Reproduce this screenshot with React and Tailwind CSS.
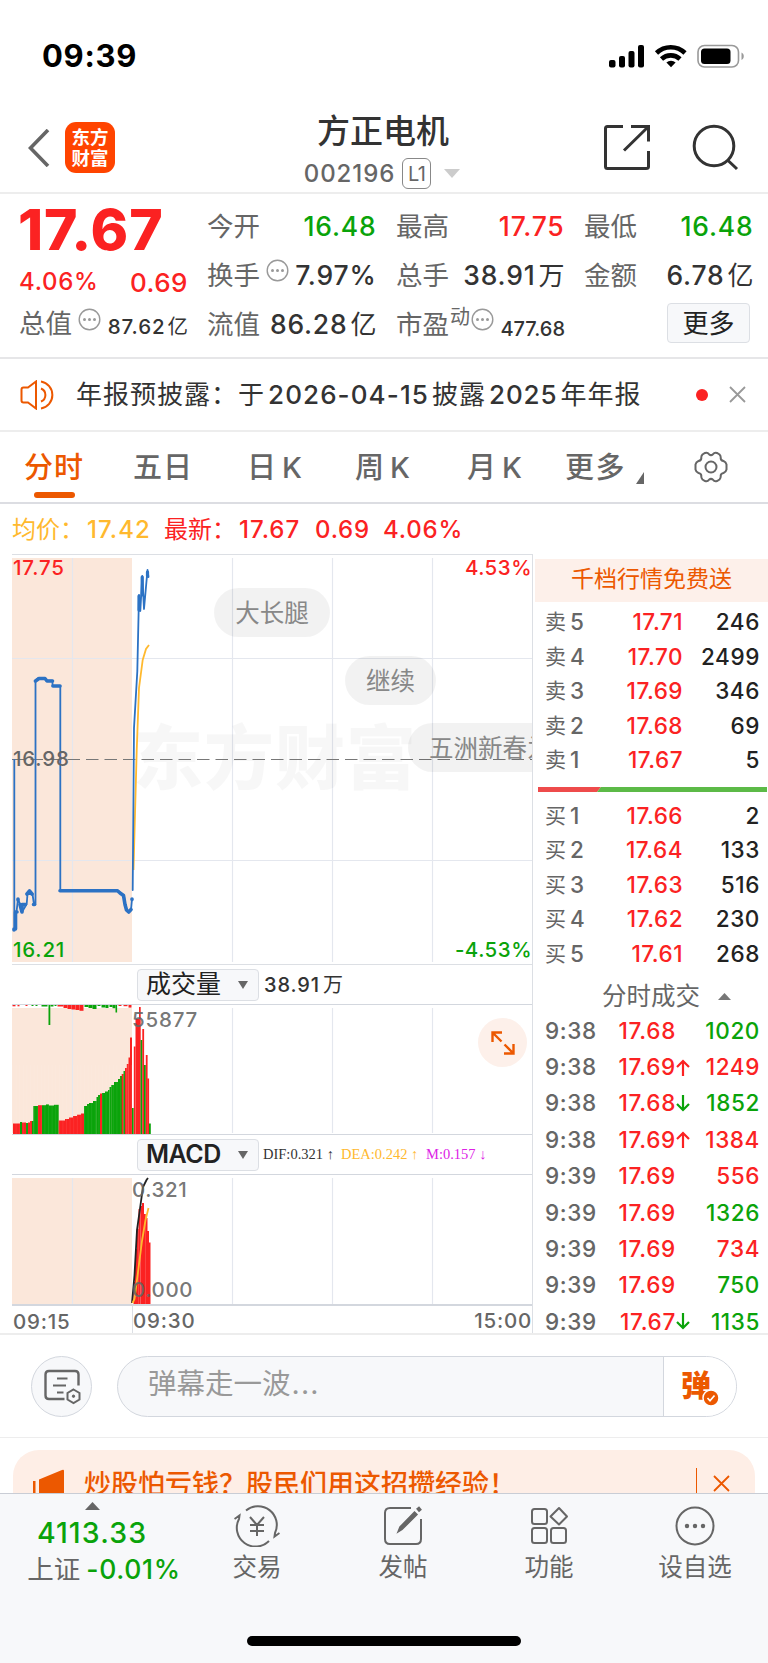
/* eslint-disable react/prop-types */

const RED = "#fb2222";
const GREEN = "#0aa30a";

const asks = [
  ["卖", "5", "17.71", "246"],
  ["卖", "4", "17.70", "2499"],
  ["卖", "3", "17.69", "346"],
  ["卖", "2", "17.68", "69"],
  ["卖", "1", "17.67", "5"],
];

const bids = [
  ["买", "1", "17.66", "2"],
  ["买", "2", "17.64", "133"],
  ["买", "3", "17.63", "516"],
  ["买", "4", "17.62", "230"],
  ["买", "5", "17.61", "268"],
];

const trades = [
  { time: "9:38", price: "17.68", qty: "1020", side: "sell" },
  { time: "9:38", price: "17.69", dir: "up", qty: "1249", side: "buy" },
  { time: "9:38", price: "17.68", dir: "down", qty: "1852", side: "sell" },
  { time: "9:38", price: "17.69", dir: "up", qty: "1384", side: "buy" },
  { time: "9:39", price: "17.69", qty: "556", side: "buy" },
  { time: "9:39", price: "17.69", qty: "1326", side: "sell" },
  { time: "9:39", price: "17.69", qty: "734", side: "buy" },
  { time: "9:39", price: "17.69", qty: "750", side: "sell" },
  { time: "9:39", price: "17.67", dir: "down", qty: "1135", side: "sell" },
];

// [x, width, bar height, colour]
const volume = [
  [1, 7, 10.5, RED], [8, 2, 12, GREEN], [10, 4, 11.5, RED], [14, 2, 11, GREEN], [16, 2, 11.5, RED],
  [18, 2, 13, RED], [20, 1.6, 13, GREEN], [21.3, 5, 28, GREEN], [26, 4, 28.8, RED], [30, 4, 28.8, GREEN],
  [34, 3, 29.6, GREEN], [37, 5, 28.5, GREEN], [42, 4.7, 29.2, GREEN], [46.7, 7, 13.5, RED], [53, 4, 15, RED],
  [57, 4, 16.5, RED], [61, 4, 18, RED], [65, 4, 19.3, RED], [69, 3.2, 20.5, RED], [72, 3, 28, GREEN],
  [75, 2, 30, GREEN], [77, 4, 31, GREEN], [81, 3.7, 33, GREEN], [84.5, 1.6, 37, GREEN], [86, 2, 39, GREEN],
  [88, 2, 40.5, RED], [90, 3, 41, GREEN], [93, 3, 42.5, GREEN], [96, 1.6, 44, GREEN], [97.5, 2, 47, GREEN],
  [99.3, 3, 49, GREEN], [102, 4, 52, GREEN], [106, 2, 55, GREEN], [108, 2, 58, GREEN], [109.7, 2, 60, RED],
  [111.5, 1.8, 63, GREEN], [113, 1.8, 66, RED], [114.8, 1.8, 70, RED], [116.5, 1.8, 76.5, RED], [118, 2, 96.5, RED],
  [120, 1.7, 26, GREEN], [121.8, 1.7, 87.5, RED], [123.5, 3.5, 115, RED], [127, 1.7, 127, RED],
  [128.6, 1.8, 94, GREEN], [130.3, 1.8, 105, RED], [132, 1.8, 69, GREEN], [133.8, 1.8, 79, RED],
  [135.3, 1.8, 55.5, RED], [137, 1.8, 10.5, GREEN],
];

// unmatched orders hanging from the top edge during the call auction
const auction = [
  [1, 3, 1.3, RED], [6, 2, 1.3, RED], [14, 2, 1, RED], [20, 2, 1, GREEN], [24, 2, 1, GREEN], [30, 6, 1.5, GREEN],
  [37, 1.8, 20, GREEN], [39, 3, 1.5, GREEN], [43, 2, 1, GREEN], [46, 6, 1.5, RED], [52, 4, 3, RED], [56, 4, 4, RED],
  [60, 4, 4.5, RED], [64, 4, 5, RED], [68, 4, 5.8, RED], [73, 4, 2, GREEN], [77, 4, 3, GREEN], [81, 4, 4, GREEN],
  [86, 3, 1, GREEN], [90, 4, 2.5, GREEN], [94, 3, 3, GREEN], [98, 3, 2, GREEN], [101, 3, 3.2, GREEN],
  [104, 1.6, 7.5, GREEN], [107, 3, 1, RED], [112, 4, 1.2, RED], [117, 3, 2.6, RED],
];

const macdBars = [
  [122, 22], [123.5, 55], [125.2, 75], [127, 95], [129, 98], [130.5, 101],
  [132.2, 90], [134, 86], [135.5, 73], [137, 61.5],
];

const StatusBar = () => (
  <div className="h-[106px] shrink-0 flex items-start justify-between pl-[42px] pr-6 pt-[38px] text-black">
    <span className="text-[31px] leading-[35px] font-bold tracking-[0.7px]">09:39</span>
    <svg className="mt-1 -mr-px" width="137" height="28" viewBox="608 42 137 28">
      <rect x="609" y="60" width="6.500" height="7.5" rx="2" />
      <rect x="619" y="56" width="6" height="11.5" rx="2" />
      <rect x="628.5" y="51" width="6" height="16.5" rx="2" />
      <rect x="638" y="45" width="6" height="22.5" rx="2" />
      <g fill="none" stroke="#000" strokeWidth="4.6">
        <path d="M656.500 53a20.5 20.5 0 0 1 28.500 0" />
        <path d="M661.500 59a13.5 13.5 0 0 1 18.500 0" />
      </g>
      <path d="M671 67.3l-4.6-4.8a6.6 6.6 0 0 1 9.2 0z" />
      <rect x="698" y="45.5" width="40.5" height="21.5" rx="6.5" fill="none" stroke="#999" strokeWidth="1.6" />
      <rect x="701" y="48.5" width="29.500" height="15.5" rx="3.5" />
      <path d="M741.500 52.5c3 1.3 3 6.200 0 7.500z" fill="#999" />
    </svg>
  </div>
);

const Header = () => (
  <div className="h-[88px] shrink-0 border-b-2 border-[#ededed] flex items-start">
    <div className="flex items-center pl-7 pt-4 w-[204px]">
      <svg width="22" height="38" viewBox="0 0 22 38" fill="none" stroke="#666" strokeWidth="3.6">
        <path d="M20 1L2.500 19 20 37" />
      </svg>
      <div className="ml-[15px] w-[50px] h-[51px] rounded-[11px] bg-[#ff4400] text-white font-bold text-[18.500px] leading-[21px] flex flex-col items-center justify-center">
        <span>东方</span>
        <span>财富</span>
      </div>
    </div>
    <div className="flex flex-col items-center flex-1 pt-[6px] pr-[19px]">
      <div className="text-[33px] leading-[38px] font-medium text-[#333]">方正电机</div>
      <div className="flex items-center mt-[8px] mr-[2px]">
        <span className="text-[24px] leading-7 font-medium text-[#666] tracking-[0.9px]">002196</span>
        <span className="ml-[7px] w-[29px] h-[31px] border-[1.500px] border-[#888] rounded-[6px] text-[20px] text-[#666] flex items-center justify-center tracking-[-0.5px]">L1</span>
        <svg className="ml-[13px]" width="16" height="9" viewBox="0 0 16 9" fill="#ccc">
          <path d="M0 0h16L8 9z" />
        </svg>
      </div>
    </div>
    <svg className="ml-[22px] mr-[29px] mt-[17px]" width="136" height="50" viewBox="603 123 136 50" fill="none" stroke="#333" strokeWidth="3">
      <path d="M623 126.500H607.500Q605.500 126.500 605.500 128.500V166.500Q605.500 168.500 607.500 168.500H646Q648.500 168.500 648.500 166.500V151" />
      <path d="M631 126.500H648.500V141.500M648.500 126.500L624 150.500" />
      <circle cx="714" cy="146" r="19.800" />
      <path d="M727.500 160L737 169" />
    </svg>
  </div>
);

const Dots = ({ className }) => (
  <svg className={className} width="23" height="23" viewBox="0 0 23 23">
    <circle cx="11.5" cy="11.5" r="10.300" fill="none" stroke="#999" strokeWidth="1.400" />
    <circle cx="6.500" cy="11.5" r="1.500" fill="#999" />
    <circle cx="11.500" cy="11.5" r="1.500" fill="#999" />
    <circle cx="16.500" cy="11.5" r="1.500" fill="#999" />
  </svg>
);

const Stat = ({ label, value, unit, color = "text-[#333]", icon }) => (
  <div className="h-[49px] flex items-center justify-between">
    <span className="flex items-center text-[26.500px] text-[#666] -ml-px">
      {label}
      {icon && <Dots className="ml-[6px] -mt-2.5" />}
    </span>
    <span className={`text-[26.500px] font-medium tracking-[0.8px] -mr-[1.500px] flex items-center ${color}`}>
      {value}
      {unit && <span className="ml-[3px] text-[26px] tracking-normal font-normal">{unit}</span>}
    </span>
  </div>
);

const Quote = () => (
  <div className="h-[165px] shrink-0 border-b-2 border-[#e6e6e8] pt-[8px] pl-5 flex text-[#333]">
    <div className="w-[167px] mr-[21px]">
      <div className="text-[57px] leading-[56px] font-extrabold text-[#fb2222] tracking-[0.9px] -ml-[2px]">17.67</div>
      <div className="flex justify-between h-[50px] items-center text-[#fb2222] -mt-px -ml-px -mr-px">
        <span className="text-[24px] font-medium tracking-[0.7px]">4.06%</span>
        <span className="text-[26px] font-medium tracking-[0.5px]">0.69</span>
      </div>
      <div className="flex items-center h-[44px] -mt-[5px] -ml-px -mr-px">
        <span className="text-[26.500px] text-[#666]">总值</span>
        <Dots className="ml-[6px] -mt-2.5" />
        <span className="ml-auto mt-[6px] text-[20.500px] font-medium tracking-[0.9px] whitespace-nowrap">
          87.62<span className="ml-[2px] font-normal tracking-normal">亿</span>
        </span>
      </div>
    </div>
    <div className="w-[167px] mr-[22px]">
      <Stat label="今开" value="16.48" color="text-[#0aa30a]" />
      <Stat label="换手" value="7.97%" icon />
      <Stat label="流值" value="86.28" unit="亿" />
    </div>
    <div className="w-[166px] mr-[22px]">
      <Stat label="最高" value="17.75" color="text-[#fb2222]" />
      <Stat label="总手" value="38.91" unit="万" />
      <div className="h-[49px] flex items-center -ml-px -mr-[2px] whitespace-nowrap">
        <span className="text-[26.500px] text-[#666]">市盈</span>
        <span className="text-[20px] text-[#666] -mt-4 ml-px">动</span>
        <Dots className="ml-px -mt-2.5" />
        <span className="ml-auto mt-[9px] text-[20px] font-medium">477.68</span>
      </div>
    </div>
    <div className="w-[167px]">
      <Stat label="最低" value="16.48" color="text-[#0aa30a]" />
      <Stat label="金额" value="6.78" unit="亿" />
      <div className="flex justify-end pr-0.5 pt-[3px]">
        <div className="w-[83px] h-10 rounded-[4px] border border-[#dcdfe4] bg-[#f7f8fa] text-[26px] text-[#222] flex items-center justify-center">
          更多
        </div>
      </div>
    </div>
  </div>
);

const Notice = () => (
  <div className="h-[73px] shrink-0 border-b-2 border-[#ededed] flex items-center pl-5 pr-[22px]">
    <svg width="36" height="30" viewBox="0 0 36 30" fill="none" stroke="#ec5800" strokeWidth="2">
      <path d="M16 1.500V28.500L8 22.500H3.500Q1.500 22.500 1.500 20.500V9.500Q1.500 7.500 3.500 7.500H8z" />
      <path d="M21 8.500a7 7 0 0 1 0 13M21 1.500a13.700 13.700 0 0 1 0 27" />
    </svg>
    <div className="ml-5 text-[26px] text-[#333] tracking-[1px] whitespace-nowrap font-medium">
      <span className="font-normal">年报预披露：于</span>
      <span className="mx-[3px] tracking-[1.100px]">2026-04-15</span>
      <span className="font-normal">披露</span>
      <span className="mx-[3px] tracking-[0.9px]">2025</span>
      <span className="font-normal">年年报</span>
    </div>
    <div className="ml-auto w-3 h-3 rounded-full bg-[#fb2222]" />
    <svg className="ml-[21px]" width="17" height="17" viewBox="0 0 17 17" stroke="#999" strokeWidth="1.800">
      <path d="M1 1l15 15M16 1L1 16" />
    </svg>
  </div>
);

const Tabs = () => (
  <div className="h-[72px] shrink-0 border-b-2 border-[#dcdde2] flex text-[29px] leading-[71px] text-[#666] font-medium whitespace-nowrap">
    <div className="relative ml-[24px] w-[109px] text-[#ec5800] tracking-[1px]">
      分时
      <span className="absolute left-[10px] bottom-[4px] w-[41px] h-[6px] rounded-full bg-[#ec5800]" />
    </div>
    <div className="w-[114px] tracking-[1px]">五日</div>
    <div className="w-[108px]">日<span className="ml-1.5">K</span></div>
    <div className="w-[112px]">周<span className="ml-1.5">K</span></div>
    <div className="w-[98px]">月<span className="ml-1.5">K</span></div>
    <div className="flex tracking-[1.500px]">
      更多
      <svg className="mt-[40px] ml-[10px]" width="8" height="12" viewBox="0 0 8 12" fill="#666">
        <path d="M8 0v12H0z" />
      </svg>
    </div>
    <svg className="ml-[50px] mt-[19px]" width="34" height="32" viewBox="0 0 34 32" fill="none" stroke="#666" strokeWidth="2">
      <path d="M11 2Q13.500 1 15 3.200Q17 5 19 3.200Q20.500 1 23 2L25.500 3.500Q27 5 26.700 7.500Q27 9.500 29.500 10Q32 11 32.500 13.500V18.500Q32 21 29.500 22Q27 22.500 26.700 24.500Q27 27 25.500 28.500L23 30Q20.500 31 19 28.800Q17 27 15 28.800Q13.500 31 11 30L8.500 28.500Q7 27 7.300 24.500Q7 22.500 4.500 22Q2 21 1.500 18.500V13.500Q2 11 4.500 10Q7 9.500 7.300 7.500Q7 5 8.500 3.500z" />
      <circle cx="17" cy="16" r="5.500" />
    </svg>
  </div>
);

const Summary = () => (
  <div className="h-[50px] shrink-0 flex items-center pl-[12px] text-[24px] font-medium text-[#fb2222] whitespace-nowrap pt-0.5">
    <span className="text-[#ffb92e] w-[152px]">
      <span className="font-normal">均价：</span>
      <span className="tracking-[1.100px] ml-[3px]">17.42</span>
    </span>
    <span className="w-[75px] font-normal">最新：</span>
    <span className="w-[76px] tracking-[1px]">17.67</span>
    <span className="w-[68px] tracking-[0.8px]">0.69</span>
    <span className="tracking-[0.8px]">4.06%</span>
  </div>
);

const Grid = ({ height, split }) => (
  <g>
    <rect x="0" y="3" width="120" height={height - 5} fill="#fbe7da" />
    <g stroke="#e4e7ee" strokeWidth="1.200">
      {[60, 220, 320, 420].map((x) => (
        <path key={x} d={`M${x + 0.5} 3V${height - 2}`} />
      ))}
      {split && <path d="M0 103.500H520M0 305.500H520" />}
    </g>
  </g>
);

const Pill = ({ className, children }) => (
  <div className={`absolute h-[49px] rounded-full bg-black/5 text-[24.500px] text-[#888] flex items-center justify-center pt-px whitespace-nowrap ${className}`}>
    {children}
  </div>
);

const PriceChart = () => (
  <div className="relative h-[411px] shrink-0 border-y border-[#dcdfe4] overflow-hidden">
    <svg className="block" width="520" height="409" viewBox="0 0 520 409">
      <Grid height={409} split />
      <text x="121" y="229" fontSize="70" fontWeight="900" fill="#000" fillOpacity="0.03" letterSpacing="1" fontFamily="Noto Sans CJK SC">
        东方财富
      </text>
      <path d="M0 204.500H520" stroke="#777" strokeWidth="1.200" strokeDasharray="12.500 6" />
      <path d="M121.500 315L124.700 196L127 133L130.700 105L134 94L137 90" fill="none" stroke="#ffb92e" strokeWidth="1.800" />
      <g fill="none" stroke="#2c72c4" strokeLinejoin="round" strokeLinecap="round">
        <path strokeWidth="1.800" d="M2.300 205V375M4.500 357L6 344L8 349L10 357L14.700 349L15.500 339L20.500 339L22 349.500H23.500V125.700L26.500 123H33L34.500 125.700H40.500V131H48.300V335.700H106L112 340.500L113 349.500L115 355L116.700 357L119 355L120 344" />
        <path strokeWidth="1.800" d="M120.700 335L122 173L125.300 116.500L127 40L128.300 56L130.300 21L132 54L135.500 15L136.500 22" />
        <path strokeWidth="3.600" d="M2 375V374M3.500 374V357H5M6 344V345M8 349.500L10 357V349.500H13.500M15 339L17.500 336L20 339M21.500 349.500H22.500M23.500 126L27 123.500H33L35 126H40.500M41 131H48M48 335.700H105.500L108 338L111.500 340.500L113 349.500L114.500 355L116.700 357L119 354.500M120 344V344.500" />
        <path strokeWidth="3.200" d="M127 41V55M130.200 22V40M135.500 17V21" />
      </g>
    </svg>
    <div className="absolute inset-0 text-[20.500px] leading-6 font-medium tracking-[0.8px]">
      <span className="absolute left-[1px] top-[1px] text-[#fb2222]">17.75</span>
      <span className="absolute left-[1px] top-[192px] text-[#666]">16.98</span>
      <span className="absolute left-[1px] bottom-[2px] text-[#0aa30a]">16.21</span>
      <span className="absolute right-0 top-[1px] text-[#fb2222] tracking-[0.5px]">4.53%</span>
      <span className="absolute right-0 bottom-[2px] text-[#0aa30a] tracking-[0.5px]">-4.53%</span>
    </div>
    <Pill className="left-[202px] top-[33px] w-[116px]">大长腿</Pill>
    <Pill className="left-[333px] top-[101px] w-[91px]">继续</Pill>
    <Pill className="left-[396px] top-[168px] w-[190px] pl-[21px] !justify-start">五洲新春为</Pill>
  </div>
);

const IndicatorButton = ({ children }) => (
  <div className="ml-[125px] w-[122px] h-[32px] rounded-[4px] border border-[#dcdfe4] bg-[#f7f8fa] flex items-center justify-between pl-[8px] pr-[10px] text-[25px] text-[#222]">
    {children}
    <svg width="10" height="8" viewBox="0 0 10 8" fill="#666">
      <path d="M0 0h10L5 8z" />
    </svg>
  </div>
);

const VolumeChart = () => (
  <>
    <div className="h-[39px] shrink-0 flex items-center pt-px">
      <IndicatorButton>成交量</IndicatorButton>
      <span className="ml-[5px] text-[20px] font-medium text-[#333] tracking-[0.9px]">
        38.91<span className="ml-[3px] font-normal">万</span>
      </span>
    </div>
    <div className="relative h-[131px] shrink-0 border-y border-[#d3d7de]">
      <svg className="block" width="520" height="129" viewBox="0 0 520 129">
        <Grid height={130} />
        {auction.map(([x, w, h, c]) => (
          <rect key={x} x={x - 0.500} y="0" width={w} height={h} fill={c} />
        ))}
        {volume.map(([x, w, h, c]) => (
          <rect key={x} x={x} y={129 - h} width={w} height={h} fill={c} />
        ))}
        <g stroke="#fff" strokeOpacity="0.15" strokeWidth="0.500">
          {Array.from({ length: 34 }, (_, i) => (
            <path key={i} d={`M${i * 3.600 + 0.500} 60V129`} />
          ))}
        </g>
      </svg>
      <span className="absolute left-[120px] top-[3px] text-[20.500px] leading-6 font-medium text-[#666]/90 tracking-[0.8px]">55877</span>
      <div className="absolute right-[5px] top-[13px] w-[49px] h-[49px] rounded-full bg-[#fdf0ea] flex items-center justify-center">
        <svg width="26" height="26" viewBox="0 0 26 26" fill="none" stroke="#ec5800" strokeWidth="2.400">
          <path d="M2.500 12V2.500H12M2.500 2.500L11.500 11.500M23.500 14V23.500H14M23.500 23.500L14.500 14.500" />
        </svg>
      </div>
    </div>
  </>
);

const MacdChart = () => (
  <>
    <div className="h-[39px] shrink-0 flex items-center pt-px">
      <IndicatorButton>
        <span className="font-semibold tracking-[-0.5px]">MACD</span>
      </IndicatorButton>
      <div className="ml-[4px] flex font-['Liberation_Serif',serif] text-[14.500px] whitespace-nowrap text-[#333]">
        <span className="w-[78px]">DIF:0.321 ↑</span>
        <span className="w-[85px] text-[#ffb92e]">DEA:0.242 ↑</span>
        <span className="text-[#dd22e6]">M:0.157 ↓</span>
      </div>
    </div>
    <div className="relative h-[132px] shrink-0 border-t border-b-2 border-[#d3d7de]">
      <svg className="block" width="520" height="129" viewBox="0 0 520 129">
        <Grid height={131} />
        {macdBars.map(([x, h]) => (
          <rect key={x} x={x - 0.500} y={129 - h} width="2" height={h} fill={RED} />
        ))}
        <path d="M120 128L122.500 100L125 55L128.500 30L131 12L134.500 5L136 3" fill="none" stroke="#222" strokeWidth="1.800" />
        <path d="M120.500 128L122.500 124L126 97L130 66L133.500 45L136.500 33" fill="none" stroke="#ffb92e" strokeWidth="1.800" />
      </svg>
      <div className="absolute inset-0 text-[20.500px] leading-6 font-medium text-[#666]/90 tracking-[0.6px]">
        <span className="absolute left-[120px] top-[3px]">0.321</span>
        <span className="absolute left-[120px] top-[103px]">0.000</span>
      </div>
    </div>
    <div className="h-[28px] shrink-0 flex items-center text-[20.500px] font-medium text-[#666] tracking-[0.8px]">
      <span className="w-[121px] h-full border-r border-[#dcdfe4] pl-px leading-[31px]">09:15</span>
      <span className="leading-[31px]">09:30</span>
      <span className="ml-auto leading-[31px]">15:00</span>
    </div>
  </>
);

const Level = ({ row }) => (
  <div className="h-[34.500px] flex items-center text-[22.500px] leading-[30px] font-medium">
    <span className="w-[52px] text-[21px] font-normal text-[#666] flex items-center -ml-px">
      {row[0]}
      <span className="ml-[4px] text-[22.500px] font-medium">{row[1]}</span>
    </span>
    <span className="w-[86px] text-right text-[#fb2222] tracking-[0.5px]">{row[2]}</span>
    <span className="flex-1 text-right text-[#222] tracking-[0.6px]">{row[3]}</span>
  </div>
);

const Arrow = ({ dir }) => (
  <svg width="14" height="17" viewBox="0 0 14 17" fill="none" stroke={dir === "up" ? RED : GREEN} strokeWidth="2.200">
    <path d={dir === "up" ? "M7 17V2M1 8L7 2L13 8" : "M7 0V15M1 9L7 15L13 9"} />
  </svg>
);

const OrderBook = () => (
  <div className="w-[235px] shrink-0 flex flex-col pt-[5px] overflow-hidden">
    <div className="h-[43px] shrink-0 ml-[2px] bg-[#fdf0ea] text-[#ec5800] text-[23px] flex items-center justify-center pb-[3px]">
      千档行情免费送
    </div>
    <div className="pl-[13px] pr-[8px] pt-[3px]">
      {asks.map((row) => <Level key={row[2]} row={row} />)}
    </div>
    <svg className="ml-[5px] mt-[9px] shrink-0" width="229" height="5" viewBox="0 0 229 5">
      <path d="M0 0h63l-4 5H0z" fill="#ee4b4b" />
      <path d="M63 0h166v5H59z" fill="#5cba47" />
    </svg>
    <div className="pl-[13px] pr-[8px] pt-[7px]">
      {bids.map((row) => <Level key={row[2]} row={row} />)}
    </div>
    <div className="h-[36px] shrink-0 mt-[7px] flex items-center pl-[69px] text-[24.500px] text-[#666]">
      分时成交
      <svg className="ml-[18px]" width="13" height="7" viewBox="0 0 13 7" fill="#777">
        <path d="M0 7h13L6.500 0z" />
      </svg>
    </div>
    <div className="pl-[12px] pr-[8px] -mt-[1.500px]">
      {trades.map((t, i) => (
        <div key={i} className="h-[36.400px] flex items-center text-[22.500px] leading-[22px] font-medium">
          <span className="w-[70px] text-[#666] tracking-[0.6px]">{t.time}</span>
          <span className="w-[61px] text-right text-[#fb2222] tracking-[0.7px] whitespace-nowrap">{t.price}</span>
          <span className="w-[16px]">{t.dir && <Arrow dir={t.dir} />}</span>
          <span className={`flex-1 text-right tracking-[0.6px] ${t.side === "buy" ? "text-[#fb2222]" : "text-[#0aa30a]"}`}>{t.qty}</span>
        </div>
      ))}
    </div>
  </div>
);

const CommentBar = () => (
  <div className="h-[103px] shrink-0 border-b border-[#ededed] flex items-center pl-[31px] pt-px">
    <div className="w-[61px] h-[61px] rounded-full border border-[#d3d7de] bg-[#f7f8fa] flex items-center justify-center">
      <svg width="38" height="36" viewBox="0 0 38 36" fill="none" stroke="#666" strokeWidth="2.400">
        <path d="M21.500 30H6Q2.500 30 2.500 26.500V5.500Q2.500 2 6 2H32Q35.500 2 35.500 5.500V16.500" />
        <path d="M14 9.500H24.500M10 16.500H23M14 23.500H20.500" strokeWidth="2" />
        <path d="M30.500 20.500L36.500 24V30.500L30.500 34L24.500 30.500V24z" strokeWidth="2" />
        <circle cx="30.500" cy="27.200" r="1.200" fill="#666" strokeWidth="1" />
      </svg>
    </div>
    <div className="ml-[25px] w-[620px] h-[61px] rounded-full border border-[#d3d7de] bg-[#f7f8fa] flex overflow-hidden">
      <div className="flex-1 pl-[30px] pb-1 flex items-center text-[28.500px] text-[#999]">
        弹幕走一波<span className="tracking-[1.200px] ml-px">...</span>
      </div>
      <div className="w-[73px] border-l border-[#d3d7de] bg-white relative text-[30px] font-black text-[#ec5800] leading-[57px] pl-[17px]">
        弹
        <svg className="absolute left-[38px] top-[32px]" width="18" height="18" viewBox="0 0 18 18">
          <circle cx="9" cy="9" r="8" fill="#ec5800" stroke="#fff" strokeWidth="1.500" />
          <path d="M5.500 9L8 11.800L12.500 6.500" fill="none" stroke="#fff" strokeWidth="1.700" />
        </svg>
      </div>
    </div>
  </div>
);

const Banner = () => (
  <div className="h-[55px] shrink-0 pt-[12px] px-[13px] overflow-hidden">
    <div className="h-[70px] rounded-[26px] bg-[#feeee6] flex items-start pl-5 text-[#ec5800]">
      <svg className="mt-[19px]" width="32" height="36" viewBox="0 0 32 36" fill="#ec5800">
        <path d="M0 12h2.500v13H0zM6 10.500L29 1Q31 0 31 2V33H17V30H10V25L6 24z" />
      </svg>
      <span className="ml-[19px] mt-[14px] text-[27px] leading-[42px] font-medium whitespace-nowrap">炒股怕亏钱？股民们用这招攒经验！</span>
      <div className="ml-auto mt-[18px] w-[1.500px] h-[30px] bg-[#ec5800]" />
      <svg className="ml-[16px] mr-[25px] mt-[25px]" width="17" height="17" viewBox="0 0 17 17" stroke="#ec5800" strokeWidth="1.800">
        <path d="M1 1l15 15M16 1L1 16" />
      </svg>
    </div>
  </div>
);

const NavItem = ({ label, children }) => (
  <div className="w-[146px] flex flex-col items-center">
    <svg className="mt-[11px]" width="46" height="42" viewBox="-23 -21 46 42" fill="none" stroke="#666" strokeWidth="2">
      {children}
    </svg>
    <span className="mt-[3px] text-[24.500px] leading-[34px] text-[#666]">{label}</span>
  </div>
);

const BottomNav = () => (
  <div className="relative flex-1 border-t border-[#c9cdd5] bg-[#f7f8fa] flex">
    <div className="w-[184px] flex flex-col items-center pt-[8px]">
      <svg width="15" height="8" viewBox="0 0 15 8" fill="#666">
        <path d="M0 8h15L7.500 0z" />
      </svg>
      <span className="mt-[5px] text-[28.500px] leading-[36px] font-medium tracking-[1.100px] text-[#0aa30a]">4113.33</span>
      <span className="flex items-center text-[26.500px] leading-[36px] text-[#666] pl-[24px] whitespace-nowrap">
        上证<span className="ml-[6px] font-medium text-[26.500px] tracking-[0.7px] text-[#0aa30a]">-0.01%</span>
      </span>
    </div>
    <NavItem label="交易">
      <path d="M-11 -15.500A18.800 18.800 0 0 1 18 7L17.500 10.500L22.500 7M12 15A18.800 18.800 0 0 1 -18 -7L-17.500 -10.500L-22.500 -7" />
      <path d="M-7 -9L0 -1L7 -9M0 -1V10M-7 -1H7M-7 5H7" />
    </NavItem>
    <NavItem label="发帖">
      <path d="M8 -18H-13Q-18 -18 -18 -13V13Q-18 18 -13 18H13Q18 18 18 13V-7" />
      <path d="M-5 6L-3 1L11.500 -14L14 -11.500L-1 3.500z" fill="#666" strokeWidth="1.500" />
      <path d="M14.500 -15.500L17.500 -18" strokeWidth="4.500" />
    </NavItem>
    <NavItem label="功能">
      <rect x="-17" y="-17" width="15" height="15" rx="2.500" />
      <rect x="-17" y="2" width="15" height="15" rx="2.500" />
      <rect x="2" y="2" width="15" height="15" rx="2.500" />
      <path d="M10 -18L18 -9.500L10 -1.500L1.500 -9.500z" strokeLinejoin="round" />
    </NavItem>
    <NavItem label="设自选">
      <circle r="18.500" />
      <g fill="#666" stroke="none">
        <circle cx="-8" r="2.200" />
        <circle r="2.200" />
        <circle cx="8" r="2.200" />
      </g>
    </NavItem>
    <div className="absolute left-[247px] bottom-[17px] w-[274px] h-[10px] rounded-full bg-black" />
  </div>
);

export default function App() {
  return (
    <div className="relative w-[768px] h-[1663px] bg-white flex flex-col overflow-hidden font-['Inter','Noto_Sans_CJK_SC',sans-serif]">
      <StatusBar />
      <Header />
      <Quote />
      <Notice />
      <Tabs />
      <Summary />
      <div className="h-[781px] shrink-0 flex border-b-2 border-[#ededed] pl-[12px] overflow-hidden">
        <div className="w-[521px] shrink-0 flex flex-col border-r border-[#dcdfe4]">
          <PriceChart />
          <VolumeChart />
          <MacdChart />
        </div>
        <OrderBook />
      </div>
      <CommentBar />
      <Banner />
      <BottomNav />
    </div>
  );
}
